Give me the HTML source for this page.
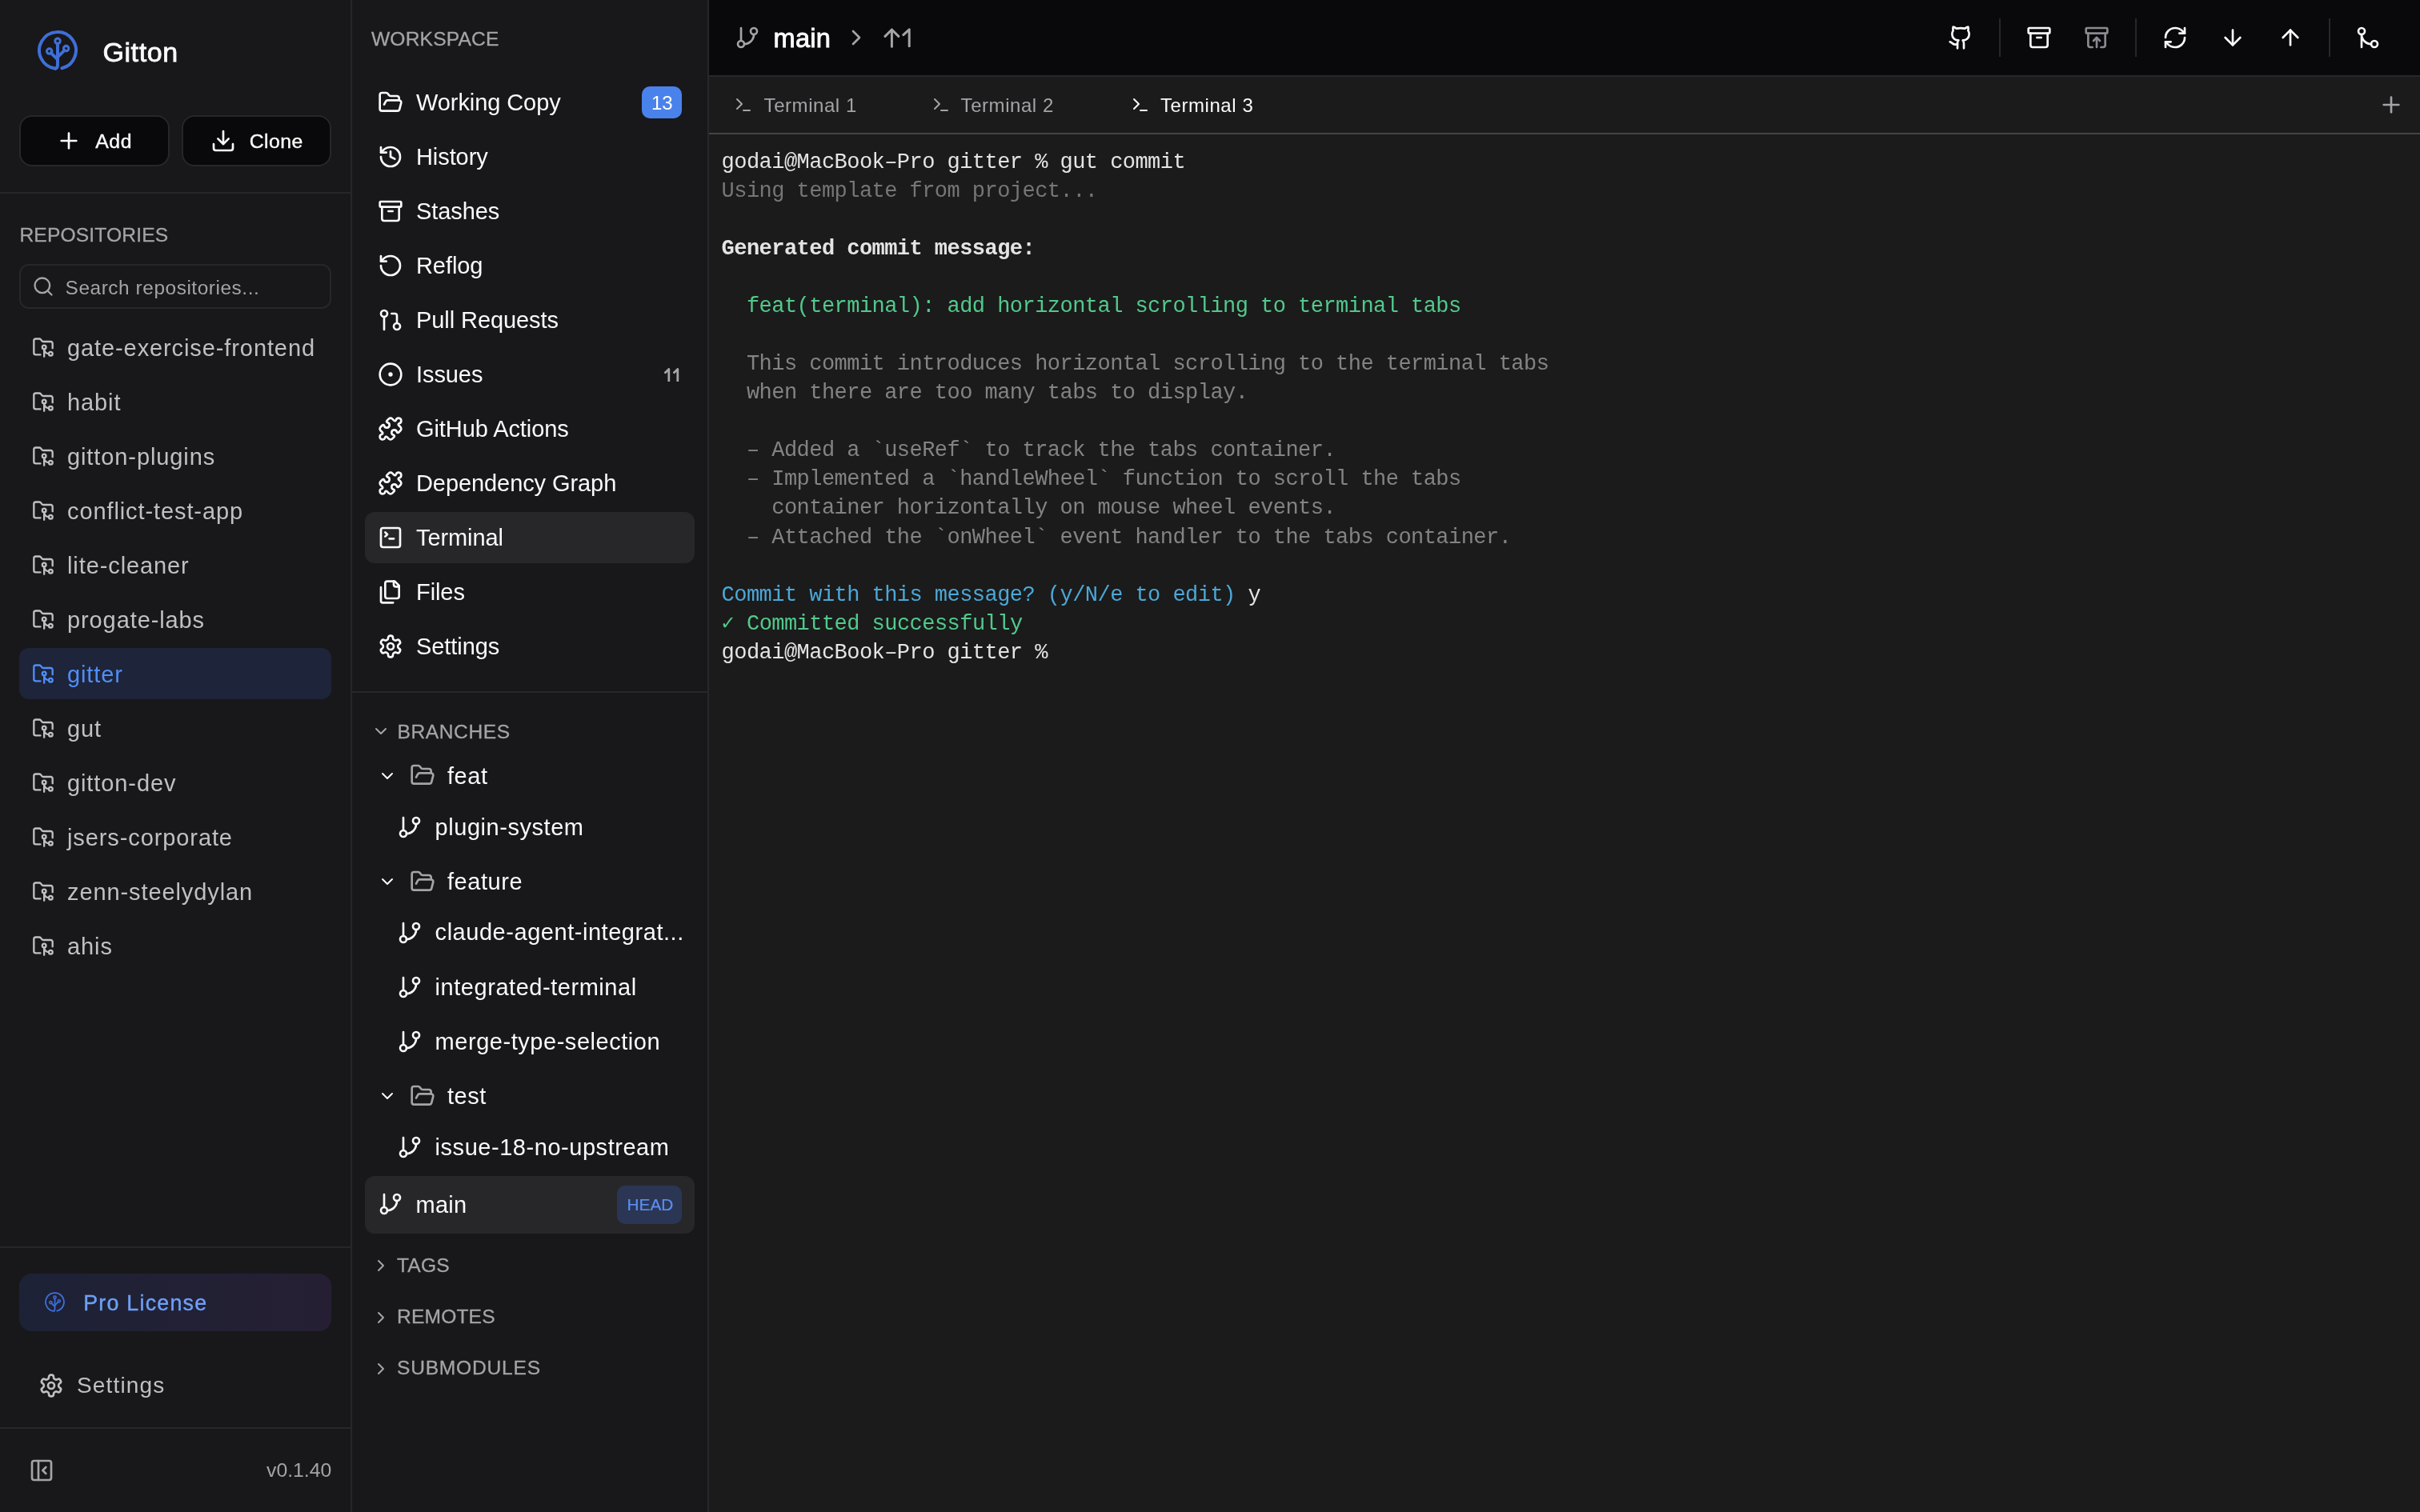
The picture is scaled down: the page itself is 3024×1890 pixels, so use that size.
<!DOCTYPE html>
<html><head><meta charset="utf-8"><title>Gitton</title>
<style>
html,body{margin:0;padding:0;background:#1b1b1b;overflow:hidden}
#root{will-change:transform;position:relative;width:1512px;height:945px;zoom:2;overflow:hidden;font-family:'Liberation Sans', sans-serif}
</style></head><body><div id="root">
<div style="position:absolute;left:0px;top:0px;width:219px;height:945px;background:#18181b;border-radius:0px;"></div>
<div style="position:absolute;left:219px;top:0px;width:1px;height:945px;background:#27272a;border-radius:0px;"></div>
<div style="position:absolute;left:220px;top:0px;width:222px;height:945px;background:#18181b;border-radius:0px;"></div>
<div style="position:absolute;left:442px;top:0px;width:1px;height:945px;background:#27272a;border-radius:0px;"></div>
<div style="position:absolute;left:443px;top:0px;width:1069px;height:47px;background:#09090b;border-radius:0px;"></div>
<div style="position:absolute;left:443px;top:47px;width:1069px;height:1px;background:#27272a;border-radius:0px;"></div>
<div style="position:absolute;left:443px;top:48px;width:1069px;height:35px;background:#1b1b1b;border-radius:0px;"></div>
<div style="position:absolute;left:443px;top:83px;width:1069px;height:1px;background:#444444;border-radius:0px;"></div>
<div style="position:absolute;left:443px;top:84px;width:1069px;height:861px;background:#1b1b1b;border-radius:0px;"></div>
<svg style="position:absolute;left:23.4px;top:19px;width:25px;height:25px" viewBox="0 0 24 24" fill="none" stroke="#3f6fd8" stroke-width="1.9" stroke-linecap="round" stroke-linejoin="round"><path d="M10.65 22.92 A11 11 0 1 1 14.6 22.69"/><path d="M12 8V20.6Q12 22.5 10.65 22.92"/><path d="M8 13.5 12 17.5"/><path d="M16.1 11.9 12 16"/><circle cx="12" cy="6.4" r="1.55" stroke-width="1.45"/><circle cx="7.06" cy="12.5" r="1.55" stroke-width="1.45"/><circle cx="17.1" cy="10.85" r="1.55" stroke-width="1.45"/></svg>
<div style="position:absolute;left:64.20px;top:23.81px;font-family:'Liberation Sans', sans-serif;font-size:17px;line-height:17px;font-weight:400;color:#fafafa;letter-spacing:0.3px;white-space:pre;-webkit-text-stroke:0.4px #fafafa;">Gitton</div>
<div style="position:absolute;left:12px;top:72px;width:94px;height:32px;background:#09090b;border-radius:8px;border:1px solid #27272a;box-sizing:border-box;"></div>
<div style="position:absolute;left:113.4px;top:72px;width:93.6px;height:32px;background:#09090b;border-radius:8px;border:1px solid #27272a;box-sizing:border-box;"></div>
<svg style="position:absolute;left:34.8px;top:80px;width:16px;height:16px" viewBox="0 0 24 24" fill="none" stroke="#fafafa" stroke-width="2" stroke-linecap="round" stroke-linejoin="round"><path d="M5 12h14"/><path d="M12 5v14"/></svg>
<div style="position:absolute;left:59.60px;top:82.25px;font-family:'Liberation Sans', sans-serif;font-size:12.4px;line-height:12.4px;font-weight:400;color:#fafafa;letter-spacing:0.3px;white-space:pre;-webkit-text-stroke:0.2px #fafafa;">Add</div>
<svg style="position:absolute;left:131.3px;top:80px;width:16px;height:16px" viewBox="0 0 24 24" fill="none" stroke="#fafafa" stroke-width="2" stroke-linecap="round" stroke-linejoin="round"><path d="M21 15v4a2 2 0 0 1-2 2H5a2 2 0 0 1-2-2v-4"/><polyline points="7 10 12 15 17 10"/><line x1="12" x2="12" y1="15" y2="3"/></svg>
<div style="position:absolute;left:155.90px;top:82.25px;font-family:'Liberation Sans', sans-serif;font-size:12.4px;line-height:12.4px;font-weight:400;color:#fafafa;letter-spacing:0.2px;white-space:pre;-webkit-text-stroke:0.2px #fafafa;">Clone</div>
<div style="position:absolute;left:0px;top:120px;width:219px;height:1px;background:#27272a;border-radius:0px;"></div>
<div style="position:absolute;left:12.20px;top:140.89px;font-family:'Liberation Sans', sans-serif;font-size:12.3px;line-height:12.3px;font-weight:400;color:#a4a4a8;letter-spacing:0.08px;white-space:pre;-webkit-text-stroke:0.15px #a4a4a8;">REPOSITORIES</div>
<div style="position:absolute;left:12px;top:165px;width:195px;height:28px;background:transparent;border-radius:6px;border:1px solid #27272a;box-sizing:border-box;"></div>
<svg style="position:absolute;left:20.2px;top:172px;width:14px;height:14px" viewBox="0 0 24 24" fill="none" stroke="#a4a4a8" stroke-width="2" stroke-linecap="round" stroke-linejoin="round"><circle cx="11" cy="11" r="8"/><path d="m21 21-4.3-4.3"/></svg>
<div style="position:absolute;left:40.80px;top:173.77px;font-family:'Liberation Sans', sans-serif;font-size:12.2px;line-height:12.2px;font-weight:400;color:#a4a4a8;letter-spacing:0.28px;white-space:pre;">Search repositories...</div>
<svg style="position:absolute;left:20px;top:210px;width:14px;height:14px" viewBox="0 0 24 24" fill="none" stroke="#c0c0c3" stroke-width="2" stroke-linecap="round" stroke-linejoin="round"><path d="M9 20H4a2 2 0 0 1-2-2V5a2 2 0 0 1 2-2h3.9a2 2 0 0 1 1.69.9l.81 1.2a2 2 0 0 0 1.67.9H20a2 2 0 0 1 2 2v5"/><circle cx="13" cy="12" r="2"/><path d="M18 19c-2.8 0-5-2.2-5-5v8"/><circle cx="20" cy="19" r="2"/></svg>
<div style="position:absolute;left:42.00px;top:210.47px;font-family:'Liberation Sans', sans-serif;font-size:14.5px;line-height:14.5px;font-weight:400;color:#c0c0c3;letter-spacing:0.45px;white-space:pre;">gate-exercise-frontend</div>
<svg style="position:absolute;left:20px;top:244px;width:14px;height:14px" viewBox="0 0 24 24" fill="none" stroke="#c0c0c3" stroke-width="2" stroke-linecap="round" stroke-linejoin="round"><path d="M9 20H4a2 2 0 0 1-2-2V5a2 2 0 0 1 2-2h3.9a2 2 0 0 1 1.69.9l.81 1.2a2 2 0 0 0 1.67.9H20a2 2 0 0 1 2 2v5"/><circle cx="13" cy="12" r="2"/><path d="M18 19c-2.8 0-5-2.2-5-5v8"/><circle cx="20" cy="19" r="2"/></svg>
<div style="position:absolute;left:42.00px;top:244.47px;font-family:'Liberation Sans', sans-serif;font-size:14.5px;line-height:14.5px;font-weight:400;color:#c0c0c3;letter-spacing:0.45px;white-space:pre;">habit</div>
<svg style="position:absolute;left:20px;top:278px;width:14px;height:14px" viewBox="0 0 24 24" fill="none" stroke="#c0c0c3" stroke-width="2" stroke-linecap="round" stroke-linejoin="round"><path d="M9 20H4a2 2 0 0 1-2-2V5a2 2 0 0 1 2-2h3.9a2 2 0 0 1 1.69.9l.81 1.2a2 2 0 0 0 1.67.9H20a2 2 0 0 1 2 2v5"/><circle cx="13" cy="12" r="2"/><path d="M18 19c-2.8 0-5-2.2-5-5v8"/><circle cx="20" cy="19" r="2"/></svg>
<div style="position:absolute;left:42.00px;top:278.47px;font-family:'Liberation Sans', sans-serif;font-size:14.5px;line-height:14.5px;font-weight:400;color:#c0c0c3;letter-spacing:0.45px;white-space:pre;">gitton-plugins</div>
<svg style="position:absolute;left:20px;top:312px;width:14px;height:14px" viewBox="0 0 24 24" fill="none" stroke="#c0c0c3" stroke-width="2" stroke-linecap="round" stroke-linejoin="round"><path d="M9 20H4a2 2 0 0 1-2-2V5a2 2 0 0 1 2-2h3.9a2 2 0 0 1 1.69.9l.81 1.2a2 2 0 0 0 1.67.9H20a2 2 0 0 1 2 2v5"/><circle cx="13" cy="12" r="2"/><path d="M18 19c-2.8 0-5-2.2-5-5v8"/><circle cx="20" cy="19" r="2"/></svg>
<div style="position:absolute;left:42.00px;top:312.47px;font-family:'Liberation Sans', sans-serif;font-size:14.5px;line-height:14.5px;font-weight:400;color:#c0c0c3;letter-spacing:0.45px;white-space:pre;">conflict-test-app</div>
<svg style="position:absolute;left:20px;top:346px;width:14px;height:14px" viewBox="0 0 24 24" fill="none" stroke="#c0c0c3" stroke-width="2" stroke-linecap="round" stroke-linejoin="round"><path d="M9 20H4a2 2 0 0 1-2-2V5a2 2 0 0 1 2-2h3.9a2 2 0 0 1 1.69.9l.81 1.2a2 2 0 0 0 1.67.9H20a2 2 0 0 1 2 2v5"/><circle cx="13" cy="12" r="2"/><path d="M18 19c-2.8 0-5-2.2-5-5v8"/><circle cx="20" cy="19" r="2"/></svg>
<div style="position:absolute;left:42.00px;top:346.47px;font-family:'Liberation Sans', sans-serif;font-size:14.5px;line-height:14.5px;font-weight:400;color:#c0c0c3;letter-spacing:0.45px;white-space:pre;">lite-cleaner</div>
<svg style="position:absolute;left:20px;top:380px;width:14px;height:14px" viewBox="0 0 24 24" fill="none" stroke="#c0c0c3" stroke-width="2" stroke-linecap="round" stroke-linejoin="round"><path d="M9 20H4a2 2 0 0 1-2-2V5a2 2 0 0 1 2-2h3.9a2 2 0 0 1 1.69.9l.81 1.2a2 2 0 0 0 1.67.9H20a2 2 0 0 1 2 2v5"/><circle cx="13" cy="12" r="2"/><path d="M18 19c-2.8 0-5-2.2-5-5v8"/><circle cx="20" cy="19" r="2"/></svg>
<div style="position:absolute;left:42.00px;top:380.47px;font-family:'Liberation Sans', sans-serif;font-size:14.5px;line-height:14.5px;font-weight:400;color:#c0c0c3;letter-spacing:0.45px;white-space:pre;">progate-labs</div>
<div style="position:absolute;left:12px;top:405px;width:195px;height:32px;background:#1e2439;border-radius:6px;"></div>
<svg style="position:absolute;left:20px;top:414px;width:14px;height:14px" viewBox="0 0 24 24" fill="none" stroke="#4f8ef7" stroke-width="2" stroke-linecap="round" stroke-linejoin="round"><path d="M9 20H4a2 2 0 0 1-2-2V5a2 2 0 0 1 2-2h3.9a2 2 0 0 1 1.69.9l.81 1.2a2 2 0 0 0 1.67.9H20a2 2 0 0 1 2 2v5"/><circle cx="13" cy="12" r="2"/><path d="M18 19c-2.8 0-5-2.2-5-5v8"/><circle cx="20" cy="19" r="2"/></svg>
<div style="position:absolute;left:42.00px;top:414.47px;font-family:'Liberation Sans', sans-serif;font-size:14.5px;line-height:14.5px;font-weight:400;color:#4f8ef7;letter-spacing:0.45px;white-space:pre;">gitter</div>
<svg style="position:absolute;left:20px;top:448px;width:14px;height:14px" viewBox="0 0 24 24" fill="none" stroke="#c0c0c3" stroke-width="2" stroke-linecap="round" stroke-linejoin="round"><path d="M9 20H4a2 2 0 0 1-2-2V5a2 2 0 0 1 2-2h3.9a2 2 0 0 1 1.69.9l.81 1.2a2 2 0 0 0 1.67.9H20a2 2 0 0 1 2 2v5"/><circle cx="13" cy="12" r="2"/><path d="M18 19c-2.8 0-5-2.2-5-5v8"/><circle cx="20" cy="19" r="2"/></svg>
<div style="position:absolute;left:42.00px;top:448.47px;font-family:'Liberation Sans', sans-serif;font-size:14.5px;line-height:14.5px;font-weight:400;color:#c0c0c3;letter-spacing:0.45px;white-space:pre;">gut</div>
<svg style="position:absolute;left:20px;top:482px;width:14px;height:14px" viewBox="0 0 24 24" fill="none" stroke="#c0c0c3" stroke-width="2" stroke-linecap="round" stroke-linejoin="round"><path d="M9 20H4a2 2 0 0 1-2-2V5a2 2 0 0 1 2-2h3.9a2 2 0 0 1 1.69.9l.81 1.2a2 2 0 0 0 1.67.9H20a2 2 0 0 1 2 2v5"/><circle cx="13" cy="12" r="2"/><path d="M18 19c-2.8 0-5-2.2-5-5v8"/><circle cx="20" cy="19" r="2"/></svg>
<div style="position:absolute;left:42.00px;top:482.47px;font-family:'Liberation Sans', sans-serif;font-size:14.5px;line-height:14.5px;font-weight:400;color:#c0c0c3;letter-spacing:0.45px;white-space:pre;">gitton-dev</div>
<svg style="position:absolute;left:20px;top:516px;width:14px;height:14px" viewBox="0 0 24 24" fill="none" stroke="#c0c0c3" stroke-width="2" stroke-linecap="round" stroke-linejoin="round"><path d="M9 20H4a2 2 0 0 1-2-2V5a2 2 0 0 1 2-2h3.9a2 2 0 0 1 1.69.9l.81 1.2a2 2 0 0 0 1.67.9H20a2 2 0 0 1 2 2v5"/><circle cx="13" cy="12" r="2"/><path d="M18 19c-2.8 0-5-2.2-5-5v8"/><circle cx="20" cy="19" r="2"/></svg>
<div style="position:absolute;left:42.00px;top:516.47px;font-family:'Liberation Sans', sans-serif;font-size:14.5px;line-height:14.5px;font-weight:400;color:#c0c0c3;letter-spacing:0.45px;white-space:pre;">jsers-corporate</div>
<svg style="position:absolute;left:20px;top:550px;width:14px;height:14px" viewBox="0 0 24 24" fill="none" stroke="#c0c0c3" stroke-width="2" stroke-linecap="round" stroke-linejoin="round"><path d="M9 20H4a2 2 0 0 1-2-2V5a2 2 0 0 1 2-2h3.9a2 2 0 0 1 1.69.9l.81 1.2a2 2 0 0 0 1.67.9H20a2 2 0 0 1 2 2v5"/><circle cx="13" cy="12" r="2"/><path d="M18 19c-2.8 0-5-2.2-5-5v8"/><circle cx="20" cy="19" r="2"/></svg>
<div style="position:absolute;left:42.00px;top:550.47px;font-family:'Liberation Sans', sans-serif;font-size:14.5px;line-height:14.5px;font-weight:400;color:#c0c0c3;letter-spacing:0.45px;white-space:pre;">zenn-steelydylan</div>
<svg style="position:absolute;left:20px;top:584px;width:14px;height:14px" viewBox="0 0 24 24" fill="none" stroke="#c0c0c3" stroke-width="2" stroke-linecap="round" stroke-linejoin="round"><path d="M9 20H4a2 2 0 0 1-2-2V5a2 2 0 0 1 2-2h3.9a2 2 0 0 1 1.69.9l.81 1.2a2 2 0 0 0 1.67.9H20a2 2 0 0 1 2 2v5"/><circle cx="13" cy="12" r="2"/><path d="M18 19c-2.8 0-5-2.2-5-5v8"/><circle cx="20" cy="19" r="2"/></svg>
<div style="position:absolute;left:42.00px;top:584.47px;font-family:'Liberation Sans', sans-serif;font-size:14.5px;line-height:14.5px;font-weight:400;color:#c0c0c3;letter-spacing:0.45px;white-space:pre;">ahis</div>
<div style="position:absolute;left:0px;top:779px;width:219px;height:1px;background:#27272a;border-radius:0px;"></div>
<div style="position:absolute;left:12px;top:796px;width:195px;height:36px;background:linear-gradient(90deg,#1d2236,#261f33);border-radius:8px;"></div>
<svg style="position:absolute;left:27.8px;top:807.6px;width:12.5px;height:12.5px" viewBox="0 0 24 24" fill="none" stroke="#3f6fd8" stroke-width="1.7" stroke-linecap="round" stroke-linejoin="round"><path d="M10.65 22.92 A11 11 0 1 1 14.6 22.69"/><path d="M12 8V20.6Q12 22.5 10.65 22.92"/><path d="M8 13.5 12 17.5"/><path d="M16.1 11.9 12 16"/><circle cx="12" cy="6.4" r="1.55" stroke-width="1.45"/><circle cx="7.06" cy="12.5" r="1.55" stroke-width="1.45"/><circle cx="17.1" cy="10.85" r="1.55" stroke-width="1.45"/></svg>
<div style="position:absolute;left:52.10px;top:808.05px;font-family:'Liberation Sans', sans-serif;font-size:13.4px;line-height:13.4px;font-weight:400;color:#6ea0f8;letter-spacing:0.62px;white-space:pre;-webkit-text-stroke:0.2px #6ea0f8;">Pro License</div>
<svg style="position:absolute;left:24px;top:858px;width:16px;height:16px" viewBox="0 0 24 24" fill="none" stroke="#c0c0c3" stroke-width="2" stroke-linecap="round" stroke-linejoin="round"><path d="M12.22 2h-.44a2 2 0 0 0-2 2v.18a2 2 0 0 1-1 1.73l-.43.25a2 2 0 0 1-2 0l-.15-.08a2 2 0 0 0-2.73.73l-.22.38a2 2 0 0 0 .73 2.73l.15.1a2 2 0 0 1 1 1.72v.51a2 2 0 0 1-1 1.74l-.15.09a2 2 0 0 0-.73 2.73l.22.38a2 2 0 0 0 2.73.73l.15-.08a2 2 0 0 1 2 0l.43.25a2 2 0 0 1 1 1.73V20a2 2 0 0 0 2 2h.44a2 2 0 0 0 2-2v-.18a2 2 0 0 1 1-1.73l.43-.25a2 2 0 0 1 2 0l.15.08a2 2 0 0 0 2.73-.73l.22-.39a2 2 0 0 0-.73-2.73l-.15-.08a2 2 0 0 1-1-1.74v-.5a2 2 0 0 1 1-1.74l.15-.09a2 2 0 0 0 .73-2.73l-.22-.38a2 2 0 0 0-2.73-.73l-.15.08a2 2 0 0 1-2 0l-.43-.25a2 2 0 0 1-1-1.73V4a2 2 0 0 0-2-2z"/><circle cx="12" cy="12" r="3"/></svg>
<div style="position:absolute;left:48.00px;top:858.90px;font-family:'Liberation Sans', sans-serif;font-size:14px;line-height:14px;font-weight:400;color:#c0c0c3;letter-spacing:0.58px;white-space:pre;">Settings</div>
<div style="position:absolute;left:0px;top:892px;width:219px;height:1px;background:#27272a;border-radius:0px;"></div>
<svg style="position:absolute;left:18px;top:911px;width:16px;height:16px" viewBox="0 0 24 24" fill="none" stroke="#a4a4a8" stroke-width="2" stroke-linecap="round" stroke-linejoin="round"><rect width="18" height="18" x="3" y="3" rx="2"/><path d="M9 3v18"/><path d="m16 15-3-3 3-3"/></svg>
<div style="position:absolute;left:166.50px;top:912.90px;font-family:'Liberation Sans', sans-serif;font-size:12.4px;line-height:12.4px;font-weight:400;color:#a4a4a8;letter-spacing:0px;white-space:pre;">v0.1.40</div>
<div style="position:absolute;left:232.00px;top:18.44px;font-family:'Liberation Sans', sans-serif;font-size:12.3px;line-height:12.3px;font-weight:400;color:#a4a4a8;letter-spacing:0.08px;white-space:pre;-webkit-text-stroke:0.15px #a4a4a8;">WORKSPACE</div>
<svg style="position:absolute;left:236px;top:56px;width:16px;height:16px" viewBox="0 0 24 24" fill="none" stroke="#fafafa" stroke-width="2" stroke-linecap="round" stroke-linejoin="round"><path d="m6 14 1.5-2.9A2 2 0 0 1 9.24 10H20a2 2 0 0 1 1.94 2.5l-1.54 6a2 2 0 0 1-1.95 1.5H4a2 2 0 0 1-2-2V5a2 2 0 0 1 2-2h3.9a2 2 0 0 1 1.69.9l.81 1.2a2 2 0 0 0 1.67.9H18a2 2 0 0 1 2 2v2"/></svg>
<div style="position:absolute;left:260.00px;top:57.02px;font-family:'Liberation Sans', sans-serif;font-size:14.5px;line-height:14.5px;font-weight:400;color:#fafafa;letter-spacing:-0.04px;white-space:pre;">Working Copy</div>
<svg style="position:absolute;left:236px;top:90px;width:16px;height:16px" viewBox="0 0 24 24" fill="none" stroke="#fafafa" stroke-width="2" stroke-linecap="round" stroke-linejoin="round"><path d="M3 12a9 9 0 1 0 9-9 9.75 9.75 0 0 0-6.74 2.74L3 8"/><path d="M3 3v5h5"/><path d="M12 7v5l4 2"/></svg>
<div style="position:absolute;left:260.00px;top:91.02px;font-family:'Liberation Sans', sans-serif;font-size:14.5px;line-height:14.5px;font-weight:400;color:#fafafa;letter-spacing:-0.04px;white-space:pre;">History</div>
<svg style="position:absolute;left:236px;top:124px;width:16px;height:16px" viewBox="0 0 24 24" fill="none" stroke="#fafafa" stroke-width="2" stroke-linecap="round" stroke-linejoin="round"><rect width="20" height="5" x="2" y="3" rx="1"/><path d="M4 8v11a2 2 0 0 0 2 2h12a2 2 0 0 0 2-2V8"/><path d="M10 12h4"/></svg>
<div style="position:absolute;left:260.00px;top:125.02px;font-family:'Liberation Sans', sans-serif;font-size:14.5px;line-height:14.5px;font-weight:400;color:#fafafa;letter-spacing:-0.04px;white-space:pre;">Stashes</div>
<svg style="position:absolute;left:236px;top:158px;width:16px;height:16px" viewBox="0 0 24 24" fill="none" stroke="#fafafa" stroke-width="2" stroke-linecap="round" stroke-linejoin="round"><path d="M3 12a9 9 0 1 0 9-9 9.75 9.75 0 0 0-6.74 2.74L3 8"/><path d="M3 3v5h5"/></svg>
<div style="position:absolute;left:260.00px;top:159.02px;font-family:'Liberation Sans', sans-serif;font-size:14.5px;line-height:14.5px;font-weight:400;color:#fafafa;letter-spacing:-0.04px;white-space:pre;">Reflog</div>
<svg style="position:absolute;left:236px;top:192px;width:16px;height:16px" viewBox="0 0 24 24" fill="none" stroke="#fafafa" stroke-width="2" stroke-linecap="round" stroke-linejoin="round"><circle cx="18" cy="18" r="3"/><circle cx="6" cy="6" r="3"/><path d="M13 6h3a2 2 0 0 1 2 2v7"/><line x1="6" x2="6" y1="9" y2="21"/></svg>
<div style="position:absolute;left:260.00px;top:193.02px;font-family:'Liberation Sans', sans-serif;font-size:14.5px;line-height:14.5px;font-weight:400;color:#fafafa;letter-spacing:-0.04px;white-space:pre;">Pull Requests</div>
<svg style="position:absolute;left:236px;top:226px;width:16px;height:16px" viewBox="0 0 24 24" fill="none" stroke="#fafafa" stroke-width="2" stroke-linecap="round" stroke-linejoin="round"><circle cx="12" cy="12" r="10"/><circle cx="12" cy="12" r="1"/></svg>
<div style="position:absolute;left:260.00px;top:227.02px;font-family:'Liberation Sans', sans-serif;font-size:14.5px;line-height:14.5px;font-weight:400;color:#fafafa;letter-spacing:-0.04px;white-space:pre;">Issues</div>
<svg style="position:absolute;left:236px;top:260px;width:16px;height:16px" viewBox="0 0 24 24" fill="none" stroke="#fafafa" stroke-width="2" stroke-linecap="round" stroke-linejoin="round"><path d="M15.39 4.39a1 1 0 0 0 1.68-.474 2.5 2.5 0 1 1 3.014 3.015 1 1 0 0 0-.474 1.68l1.683 1.682a2.414 2.414 0 0 1 0 3.414L19.61 15.39a1 1 0 0 1-1.68-.474 2.5 2.5 0 1 0-3.014 3.015 1 1 0 0 1 .474 1.68l-1.683 1.682a2.414 2.414 0 0 1-3.414 0L8.61 19.61a1 1 0 0 0-1.68.474 2.5 2.5 0 1 1-3.014-3.015 1 1 0 0 0 .474-1.68l-1.683-1.682a2.414 2.414 0 0 1 0-3.414L4.39 8.61a1 1 0 0 1 1.68.474 2.5 2.5 0 1 0 3.014-3.015 1 1 0 0 1-.474-1.68l1.683-1.682a2.414 2.414 0 0 1 3.414 0z"/></svg>
<div style="position:absolute;left:260.00px;top:261.02px;font-family:'Liberation Sans', sans-serif;font-size:14.5px;line-height:14.5px;font-weight:400;color:#fafafa;letter-spacing:-0.04px;white-space:pre;">GitHub Actions</div>
<svg style="position:absolute;left:236px;top:294px;width:16px;height:16px" viewBox="0 0 24 24" fill="none" stroke="#fafafa" stroke-width="2" stroke-linecap="round" stroke-linejoin="round"><path d="M15.39 4.39a1 1 0 0 0 1.68-.474 2.5 2.5 0 1 1 3.014 3.015 1 1 0 0 0-.474 1.68l1.683 1.682a2.414 2.414 0 0 1 0 3.414L19.61 15.39a1 1 0 0 1-1.68-.474 2.5 2.5 0 1 0-3.014 3.015 1 1 0 0 1 .474 1.68l-1.683 1.682a2.414 2.414 0 0 1-3.414 0L8.61 19.61a1 1 0 0 0-1.68.474 2.5 2.5 0 1 1-3.014-3.015 1 1 0 0 0 .474-1.68l-1.683-1.682a2.414 2.414 0 0 1 0-3.414L4.39 8.61a1 1 0 0 1 1.68.474 2.5 2.5 0 1 0 3.014-3.015 1 1 0 0 1-.474-1.68l1.683-1.682a2.414 2.414 0 0 1 3.414 0z"/></svg>
<div style="position:absolute;left:260.00px;top:295.02px;font-family:'Liberation Sans', sans-serif;font-size:14.5px;line-height:14.5px;font-weight:400;color:#fafafa;letter-spacing:-0.04px;white-space:pre;">Dependency Graph</div>
<div style="position:absolute;left:228px;top:320px;width:206px;height:32px;background:#27272a;border-radius:6px;"></div>
<svg style="position:absolute;left:236px;top:328px;width:16px;height:16px" viewBox="0 0 24 24" fill="none" stroke="#fafafa" stroke-width="2" stroke-linecap="round" stroke-linejoin="round"><path d="m7 11 2-2-2-2"/><path d="M11 13h4"/><rect width="18" height="18" x="3" y="3" rx="2" ry="2"/></svg>
<div style="position:absolute;left:260.00px;top:329.02px;font-family:'Liberation Sans', sans-serif;font-size:14.5px;line-height:14.5px;font-weight:400;color:#fafafa;letter-spacing:-0.04px;white-space:pre;">Terminal</div>
<svg style="position:absolute;left:236px;top:362px;width:16px;height:16px" viewBox="0 0 24 24" fill="none" stroke="#fafafa" stroke-width="2" stroke-linecap="round" stroke-linejoin="round"><path d="M20 7h-3a2 2 0 0 1-2-2V2"/><path d="M9 18a2 2 0 0 1-2-2V4a2 2 0 0 1 2-2h7l4 4v10a2 2 0 0 1-2 2Z"/><path d="M3 7.6v12.8A1.6 1.6 0 0 0 4.6 22h9.8"/></svg>
<div style="position:absolute;left:260.00px;top:363.02px;font-family:'Liberation Sans', sans-serif;font-size:14.5px;line-height:14.5px;font-weight:400;color:#fafafa;letter-spacing:-0.04px;white-space:pre;">Files</div>
<svg style="position:absolute;left:236px;top:396px;width:16px;height:16px" viewBox="0 0 24 24" fill="none" stroke="#fafafa" stroke-width="2" stroke-linecap="round" stroke-linejoin="round"><path d="M12.22 2h-.44a2 2 0 0 0-2 2v.18a2 2 0 0 1-1 1.73l-.43.25a2 2 0 0 1-2 0l-.15-.08a2 2 0 0 0-2.73.73l-.22.38a2 2 0 0 0 .73 2.73l.15.1a2 2 0 0 1 1 1.72v.51a2 2 0 0 1-1 1.74l-.15.09a2 2 0 0 0-.73 2.73l.22.38a2 2 0 0 0 2.73.73l.15-.08a2 2 0 0 1 2 0l.43.25a2 2 0 0 1 1 1.73V20a2 2 0 0 0 2 2h.44a2 2 0 0 0 2-2v-.18a2 2 0 0 1 1-1.73l.43-.25a2 2 0 0 1 2 0l.15.08a2 2 0 0 0 2.73-.73l.22-.39a2 2 0 0 0-.73-2.73l-.15-.08a2 2 0 0 1-1-1.74v-.5a2 2 0 0 1 1-1.74l.15-.09a2 2 0 0 0 .73-2.73l-.22-.38a2 2 0 0 0-2.73-.73l-.15.08a2 2 0 0 1-2 0l-.43-.25a2 2 0 0 1-1-1.73V4a2 2 0 0 0-2-2z"/><circle cx="12" cy="12" r="3"/></svg>
<div style="position:absolute;left:260.00px;top:397.02px;font-family:'Liberation Sans', sans-serif;font-size:14.5px;line-height:14.5px;font-weight:400;color:#fafafa;letter-spacing:-0.04px;white-space:pre;">Settings</div>
<div style="position:absolute;left:401px;top:54px;width:25px;height:20px;background:#4a82ec;border-radius:5px;"></div>
<div style="position:absolute;left:407.00px;top:58.34px;font-family:'Liberation Sans', sans-serif;font-size:12px;line-height:12px;font-weight:400;color:#ffffff;letter-spacing:0px;white-space:pre;">13</div>
<svg style="position:absolute;left:415.1px;top:229.75px;width:9.4px;height:8.85px" viewBox="0 0 9.4 8.85" fill="none" stroke="#a4a4a8" stroke-width="1.4" stroke-linecap="round" stroke-linejoin="round"><path d="M0.7 2.9 2.9 0.7V8.15"/><path d="M6.2 2.9 8.4 0.7V8.15"/></svg>
<div style="position:absolute;left:220px;top:432px;width:222px;height:1px;background:#27272a;border-radius:0px;"></div>
<svg style="position:absolute;left:232px;top:451.2px;width:12px;height:12px" viewBox="0 0 24 24" fill="none" stroke="#a4a4a8" stroke-width="2" stroke-linecap="round" stroke-linejoin="round"><path d="m6 9 6 6 6-6"/></svg>
<div style="position:absolute;left:248.20px;top:451.54px;font-family:'Liberation Sans', sans-serif;font-size:12.3px;line-height:12.3px;font-weight:400;color:#a4a4a8;letter-spacing:0.3px;white-space:pre;-webkit-text-stroke:0.15px #a4a4a8;">BRANCHES</div>
<svg style="position:absolute;left:236px;top:479px;width:12px;height:12px" viewBox="0 0 24 24" fill="none" stroke="#fafafa" stroke-width="2" stroke-linecap="round" stroke-linejoin="round"><path d="m6 9 6 6 6-6"/></svg>
<svg style="position:absolute;left:256px;top:476.7px;width:16px;height:16px" viewBox="0 0 24 24" fill="none" stroke="#a4a4a8" stroke-width="2" stroke-linecap="round" stroke-linejoin="round"><path d="m6 14 1.5-2.9A2 2 0 0 1 9.24 10H20a2 2 0 0 1 1.94 2.5l-1.54 6a2 2 0 0 1-1.95 1.5H4a2 2 0 0 1-2-2V5a2 2 0 0 1 2-2h3.9a2 2 0 0 1 1.69.9l.81 1.2a2 2 0 0 0 1.67.9H18a2 2 0 0 1 2 2v2"/></svg>
<div style="position:absolute;left:279.50px;top:477.87px;font-family:'Liberation Sans', sans-serif;font-size:14.5px;line-height:14.5px;font-weight:400;color:#fafafa;letter-spacing:0.27px;white-space:pre;">feat</div>
<svg style="position:absolute;left:248px;top:509px;width:16px;height:16px" viewBox="0 0 24 24" fill="none" stroke="#fafafa" stroke-width="2" stroke-linecap="round" stroke-linejoin="round"><line x1="6" x2="6" y1="3" y2="15"/><circle cx="18" cy="6" r="3"/><circle cx="6" cy="18" r="3"/><path d="M18 9a9 9 0 0 1-9 9"/></svg>
<div style="position:absolute;left:271.80px;top:509.87px;font-family:'Liberation Sans', sans-serif;font-size:14.5px;line-height:14.5px;font-weight:400;color:#fafafa;letter-spacing:0.27px;white-space:pre;">plugin-system</div>
<svg style="position:absolute;left:236px;top:545.1px;width:12px;height:12px" viewBox="0 0 24 24" fill="none" stroke="#fafafa" stroke-width="2" stroke-linecap="round" stroke-linejoin="round"><path d="m6 9 6 6 6-6"/></svg>
<svg style="position:absolute;left:256px;top:542.8000000000001px;width:16px;height:16px" viewBox="0 0 24 24" fill="none" stroke="#a4a4a8" stroke-width="2" stroke-linecap="round" stroke-linejoin="round"><path d="m6 14 1.5-2.9A2 2 0 0 1 9.24 10H20a2 2 0 0 1 1.94 2.5l-1.54 6a2 2 0 0 1-1.95 1.5H4a2 2 0 0 1-2-2V5a2 2 0 0 1 2-2h3.9a2 2 0 0 1 1.69.9l.81 1.2a2 2 0 0 0 1.67.9H18a2 2 0 0 1 2 2v2"/></svg>
<div style="position:absolute;left:279.50px;top:543.77px;font-family:'Liberation Sans', sans-serif;font-size:14.5px;line-height:14.5px;font-weight:400;color:#fafafa;letter-spacing:0.27px;white-space:pre;">feature</div>
<svg style="position:absolute;left:248px;top:575.1px;width:16px;height:16px" viewBox="0 0 24 24" fill="none" stroke="#fafafa" stroke-width="2" stroke-linecap="round" stroke-linejoin="round"><line x1="6" x2="6" y1="3" y2="15"/><circle cx="18" cy="6" r="3"/><circle cx="6" cy="18" r="3"/><path d="M18 9a9 9 0 0 1-9 9"/></svg>
<div style="position:absolute;left:271.80px;top:575.67px;font-family:'Liberation Sans', sans-serif;font-size:14.5px;line-height:14.5px;font-weight:400;color:#fafafa;letter-spacing:0.27px;white-space:pre;">claude-agent-integrat...</div>
<svg style="position:absolute;left:248px;top:609px;width:16px;height:16px" viewBox="0 0 24 24" fill="none" stroke="#fafafa" stroke-width="2" stroke-linecap="round" stroke-linejoin="round"><line x1="6" x2="6" y1="3" y2="15"/><circle cx="18" cy="6" r="3"/><circle cx="6" cy="18" r="3"/><path d="M18 9a9 9 0 0 1-9 9"/></svg>
<div style="position:absolute;left:271.80px;top:609.87px;font-family:'Liberation Sans', sans-serif;font-size:14.5px;line-height:14.5px;font-weight:400;color:#fafafa;letter-spacing:0.27px;white-space:pre;">integrated-terminal</div>
<svg style="position:absolute;left:248px;top:643px;width:16px;height:16px" viewBox="0 0 24 24" fill="none" stroke="#fafafa" stroke-width="2" stroke-linecap="round" stroke-linejoin="round"><line x1="6" x2="6" y1="3" y2="15"/><circle cx="18" cy="6" r="3"/><circle cx="6" cy="18" r="3"/><path d="M18 9a9 9 0 0 1-9 9"/></svg>
<div style="position:absolute;left:271.80px;top:643.97px;font-family:'Liberation Sans', sans-serif;font-size:14.5px;line-height:14.5px;font-weight:400;color:#fafafa;letter-spacing:0.27px;white-space:pre;">merge-type-selection</div>
<svg style="position:absolute;left:236px;top:679.2px;width:12px;height:12px" viewBox="0 0 24 24" fill="none" stroke="#fafafa" stroke-width="2" stroke-linecap="round" stroke-linejoin="round"><path d="m6 9 6 6 6-6"/></svg>
<svg style="position:absolute;left:256px;top:676.9000000000001px;width:16px;height:16px" viewBox="0 0 24 24" fill="none" stroke="#a4a4a8" stroke-width="2" stroke-linecap="round" stroke-linejoin="round"><path d="m6 14 1.5-2.9A2 2 0 0 1 9.24 10H20a2 2 0 0 1 1.94 2.5l-1.54 6a2 2 0 0 1-1.95 1.5H4a2 2 0 0 1-2-2V5a2 2 0 0 1 2-2h3.9a2 2 0 0 1 1.69.9l.81 1.2a2 2 0 0 0 1.67.9H18a2 2 0 0 1 2 2v2"/></svg>
<div style="position:absolute;left:279.50px;top:677.97px;font-family:'Liberation Sans', sans-serif;font-size:14.5px;line-height:14.5px;font-weight:400;color:#fafafa;letter-spacing:0.27px;white-space:pre;">test</div>
<svg style="position:absolute;left:248px;top:708.9px;width:16px;height:16px" viewBox="0 0 24 24" fill="none" stroke="#fafafa" stroke-width="2" stroke-linecap="round" stroke-linejoin="round"><line x1="6" x2="6" y1="3" y2="15"/><circle cx="18" cy="6" r="3"/><circle cx="6" cy="18" r="3"/><path d="M18 9a9 9 0 0 1-9 9"/></svg>
<div style="position:absolute;left:271.80px;top:709.97px;font-family:'Liberation Sans', sans-serif;font-size:14.5px;line-height:14.5px;font-weight:400;color:#fafafa;letter-spacing:0.27px;white-space:pre;">issue-18-no-upstream</div>
<div style="position:absolute;left:228px;top:735px;width:206px;height:36px;background:#27272a;border-radius:6px;"></div>
<svg style="position:absolute;left:236px;top:744.7px;width:16px;height:16px" viewBox="0 0 24 24" fill="none" stroke="#fafafa" stroke-width="2" stroke-linecap="round" stroke-linejoin="round"><line x1="6" x2="6" y1="3" y2="15"/><circle cx="18" cy="6" r="3"/><circle cx="6" cy="18" r="3"/><path d="M18 9a9 9 0 0 1-9 9"/></svg>
<div style="position:absolute;left:259.80px;top:745.82px;font-family:'Liberation Sans', sans-serif;font-size:14.5px;line-height:14.5px;font-weight:400;color:#fafafa;letter-spacing:0.1px;white-space:pre;">main</div>
<div style="position:absolute;left:385.6px;top:741px;width:40.4px;height:24px;background:#2a3654;border-radius:5px;"></div>
<div style="position:absolute;left:391.80px;top:747.89px;font-family:'Liberation Sans', sans-serif;font-size:10.4px;line-height:10.4px;font-weight:400;color:#5b8def;letter-spacing:0px;white-space:pre;-webkit-text-stroke:0.12px #5b8def;">HEAD</div>
<svg style="position:absolute;left:232px;top:785.1px;width:12px;height:12px" viewBox="0 0 24 24" fill="none" stroke="#a4a4a8" stroke-width="2" stroke-linecap="round" stroke-linejoin="round"><path d="m9 18 6-6-6-6"/></svg>
<div style="position:absolute;left:248.00px;top:784.94px;font-family:'Liberation Sans', sans-serif;font-size:12.3px;line-height:12.3px;font-weight:400;color:#a4a4a8;letter-spacing:0.08px;white-space:pre;-webkit-text-stroke:0.15px #a4a4a8;">TAGS</div>
<svg style="position:absolute;left:232px;top:817.4px;width:12px;height:12px" viewBox="0 0 24 24" fill="none" stroke="#a4a4a8" stroke-width="2" stroke-linecap="round" stroke-linejoin="round"><path d="m9 18 6-6-6-6"/></svg>
<div style="position:absolute;left:248.00px;top:817.24px;font-family:'Liberation Sans', sans-serif;font-size:12.3px;line-height:12.3px;font-weight:400;color:#a4a4a8;letter-spacing:0.08px;white-space:pre;-webkit-text-stroke:0.15px #a4a4a8;">REMOTES</div>
<svg style="position:absolute;left:232px;top:849.4px;width:12px;height:12px" viewBox="0 0 24 24" fill="none" stroke="#a4a4a8" stroke-width="2" stroke-linecap="round" stroke-linejoin="round"><path d="m9 18 6-6-6-6"/></svg>
<div style="position:absolute;left:248.00px;top:849.24px;font-family:'Liberation Sans', sans-serif;font-size:12.3px;line-height:12.3px;font-weight:400;color:#a4a4a8;letter-spacing:0.38px;white-space:pre;-webkit-text-stroke:0.15px #a4a4a8;">SUBMODULES</div>
<svg style="position:absolute;left:459px;top:15.5px;width:16px;height:16px" viewBox="0 0 24 24" fill="none" stroke="#a4a4a8" stroke-width="2" stroke-linecap="round" stroke-linejoin="round"><line x1="6" x2="6" y1="3" y2="15"/><circle cx="18" cy="6" r="3"/><circle cx="6" cy="18" r="3"/><path d="M18 9a9 9 0 0 1-9 9"/></svg>
<div style="position:absolute;left:483.30px;top:15.80px;font-family:'Liberation Sans', sans-serif;font-size:16.3px;line-height:16.3px;font-weight:400;color:#fafafa;letter-spacing:0.1px;white-space:pre;-webkit-text-stroke:0.45px #fafafa;">main</div>
<svg style="position:absolute;left:527px;top:15.5px;width:16px;height:16px" viewBox="0 0 24 24" fill="none" stroke="#a4a4a8" stroke-width="2" stroke-linecap="round" stroke-linejoin="round"><path d="m9 18 6-6-6-6"/></svg>
<svg style="position:absolute;left:551.9px;top:17.4px;width:10.4px;height:12.6px" viewBox="0 0 10.4 12.6" fill="none" stroke="#a4a4a8" stroke-width="1.5" stroke-linecap="round" stroke-linejoin="round"><path d="M1 5.2 5.2 1 9.4 5.2"/><path d="M5.2 1v10.6"/></svg>
<svg style="position:absolute;left:563.3px;top:17.4px;width:6px;height:12.2px" viewBox="0 0 6 12.2" fill="none" stroke="#a4a4a8" stroke-width="1.5" stroke-linecap="round" stroke-linejoin="round"><path d="M0.9 4.3 4.6 0.9V11.4"/></svg>
<svg style="position:absolute;left:1216.9px;top:15.4px;width:16px;height:16px" viewBox="0 0 24 24" fill="none" stroke="#fafafa" stroke-width="2" stroke-linecap="round" stroke-linejoin="round"><path d="M15 22v-4a4.8 4.8 0 0 0-1-3.5c3 0 6-2 6-5.5.08-1.25-.27-2.48-1-3.5.28-1.15.28-2.35 0-3.5 0 0-1 0-3 1.5-2.64-.5-5.36-.5-8 0C6 2 5 2 5 2c-.3 1.15-.3 2.35 0 3.5A5.403 5.403 0 0 0 4 9c0 3.5 3 5.5 6 5.5-.39.49-.68 1.05-.85 1.65-.17.6-.22 1.23-.15 1.85v4"/><path d="M9 18c-4.51 2-5-2-7-2"/></svg>
<div style="position:absolute;left:1249px;top:11.5px;width:1px;height:24px;background:#27272a;border-radius:0px;"></div>
<svg style="position:absolute;left:1266.1px;top:15.5px;width:16px;height:16px" viewBox="0 0 24 24" fill="none" stroke="#fafafa" stroke-width="2" stroke-linecap="round" stroke-linejoin="round"><rect width="20" height="5" x="2" y="3" rx="1"/><path d="M4 8v11a2 2 0 0 0 2 2h12a2 2 0 0 0 2-2V8"/><path d="M10 12h4"/></svg>
<svg style="position:absolute;left:1302px;top:15.5px;width:16px;height:16px" viewBox="0 0 24 24" fill="none" stroke="#8a8a90" stroke-width="2" stroke-linecap="round" stroke-linejoin="round"><rect width="20" height="5" x="2" y="3" rx="1"/><path d="M4 8v11a2 2 0 0 0 2 2h2"/><path d="M20 8v11a2 2 0 0 1-2 2h-2"/><path d="m9 15 3-3 3 3"/><path d="M12 12v9"/></svg>
<div style="position:absolute;left:1334px;top:11.5px;width:1px;height:24px;background:#27272a;border-radius:0px;"></div>
<svg style="position:absolute;left:1351px;top:15.5px;width:16px;height:16px" viewBox="0 0 24 24" fill="none" stroke="#fafafa" stroke-width="2" stroke-linecap="round" stroke-linejoin="round"><path d="M3 12a9 9 0 0 1 9-9 9.75 9.75 0 0 1 6.74 2.74L21 8"/><path d="M21 3v5h-5"/><path d="M21 12a9 9 0 0 1-9 9 9.75 9.75 0 0 1-6.74-2.74L3 16"/><path d="M8 16H3v5"/></svg>
<svg style="position:absolute;left:1387px;top:15.5px;width:16px;height:16px" viewBox="0 0 24 24" fill="none" stroke="#fafafa" stroke-width="2" stroke-linecap="round" stroke-linejoin="round"><path d="M12 5v14"/><path d="m19 12-7 7-7-7"/></svg>
<svg style="position:absolute;left:1423px;top:15.5px;width:16px;height:16px" viewBox="0 0 24 24" fill="none" stroke="#fafafa" stroke-width="2" stroke-linecap="round" stroke-linejoin="round"><path d="m5 12 7-7 7 7"/><path d="M12 19V5"/></svg>
<div style="position:absolute;left:1455px;top:11.5px;width:1px;height:24px;background:#27272a;border-radius:0px;"></div>
<svg style="position:absolute;left:1471.7px;top:15.5px;width:16px;height:16px" viewBox="0 0 24 24" fill="none" stroke="#fafafa" stroke-width="2" stroke-linecap="round" stroke-linejoin="round"><circle cx="18" cy="18" r="3"/><circle cx="6" cy="6" r="3"/><path d="M6 21V9a9 9 0 0 0 9 9"/></svg>
<svg style="position:absolute;left:458.6px;top:59.6px;width:12px;height:12px" viewBox="0 0 24 24" fill="none" stroke="#a4a4a8" stroke-width="2" stroke-linecap="round" stroke-linejoin="round"><polyline points="4 17 10 11 4 5"/><line x1="12" x2="20" y1="19" y2="19"/></svg>
<div style="position:absolute;left:477.30px;top:59.94px;font-family:'Liberation Sans', sans-serif;font-size:12.0px;line-height:12.0px;font-weight:400;color:#a4a4a8;letter-spacing:0.28px;white-space:pre;">Terminal 1</div>
<svg style="position:absolute;left:582.1px;top:59.6px;width:12px;height:12px" viewBox="0 0 24 24" fill="none" stroke="#a4a4a8" stroke-width="2" stroke-linecap="round" stroke-linejoin="round"><polyline points="4 17 10 11 4 5"/><line x1="12" x2="20" y1="19" y2="19"/></svg>
<div style="position:absolute;left:600.30px;top:59.94px;font-family:'Liberation Sans', sans-serif;font-size:12.0px;line-height:12.0px;font-weight:400;color:#a4a4a8;letter-spacing:0.28px;white-space:pre;">Terminal 2</div>
<svg style="position:absolute;left:706.6px;top:59.6px;width:12px;height:12px" viewBox="0 0 24 24" fill="none" stroke="#fafafa" stroke-width="2" stroke-linecap="round" stroke-linejoin="round"><polyline points="4 17 10 11 4 5"/><line x1="12" x2="20" y1="19" y2="19"/></svg>
<div style="position:absolute;left:725.00px;top:59.94px;font-family:'Liberation Sans', sans-serif;font-size:12.0px;line-height:12.0px;font-weight:400;color:#fafafa;letter-spacing:0.28px;white-space:pre;">Terminal 3</div>
<svg style="position:absolute;left:1486px;top:57.5px;width:16px;height:16px" viewBox="0 0 24 24" fill="none" stroke="#a4a4a8" stroke-width="2" stroke-linecap="round" stroke-linejoin="round"><path d="M5 12h14"/><path d="M12 5v14"/></svg>
<div style="position:absolute;left:450.8px;top:94.86px;font-family:'Liberation Mono', monospace;font-size:13.5px;line-height:13.5px;letter-spacing:-0.27px;white-space:pre"><span style="color:#e4e4e4;font-weight:400">godai@MacBook–Pro gitter % gut commit</span></div>
<div style="position:absolute;left:450.8px;top:112.89px;font-family:'Liberation Mono', monospace;font-size:13.5px;line-height:13.5px;letter-spacing:-0.27px;white-space:pre"><span style="color:#767676;font-weight:400">Using template from project...</span></div>
<div style="position:absolute;left:450.8px;top:148.95px;font-family:'Liberation Mono', monospace;font-size:13.5px;line-height:13.5px;letter-spacing:-0.27px;white-space:pre"><span style="color:#e4e4e4;font-weight:700">Generated commit message:</span></div>
<div style="position:absolute;left:450.8px;top:185.01px;font-family:'Liberation Mono', monospace;font-size:13.5px;line-height:13.5px;letter-spacing:-0.27px;white-space:pre"><span style="color:#52c98c;font-weight:400">  feat(terminal): add horizontal scrolling to terminal tabs</span></div>
<div style="position:absolute;left:450.8px;top:221.07px;font-family:'Liberation Mono', monospace;font-size:13.5px;line-height:13.5px;letter-spacing:-0.27px;white-space:pre"><span style="color:#838383;font-weight:400">  This commit introduces horizontal scrolling to the terminal tabs</span></div>
<div style="position:absolute;left:450.8px;top:239.10px;font-family:'Liberation Mono', monospace;font-size:13.5px;line-height:13.5px;letter-spacing:-0.27px;white-space:pre"><span style="color:#838383;font-weight:400">  when there are too many tabs to display.</span></div>
<div style="position:absolute;left:450.8px;top:275.16px;font-family:'Liberation Mono', monospace;font-size:13.5px;line-height:13.5px;letter-spacing:-0.27px;white-space:pre"><span style="color:#838383;font-weight:400">  – Added a `useRef` to track the tabs container.</span></div>
<div style="position:absolute;left:450.8px;top:293.19px;font-family:'Liberation Mono', monospace;font-size:13.5px;line-height:13.5px;letter-spacing:-0.27px;white-space:pre"><span style="color:#838383;font-weight:400">  – Implemented a `handleWheel` function to scroll the tabs</span></div>
<div style="position:absolute;left:450.8px;top:311.22px;font-family:'Liberation Mono', monospace;font-size:13.5px;line-height:13.5px;letter-spacing:-0.27px;white-space:pre"><span style="color:#838383;font-weight:400">    container horizontally on mouse wheel events.</span></div>
<div style="position:absolute;left:450.8px;top:329.25px;font-family:'Liberation Mono', monospace;font-size:13.5px;line-height:13.5px;letter-spacing:-0.27px;white-space:pre"><span style="color:#838383;font-weight:400">  – Attached the `onWheel` event handler to the tabs container.</span></div>
<div style="position:absolute;left:450.8px;top:365.31px;font-family:'Liberation Mono', monospace;font-size:13.5px;line-height:13.5px;letter-spacing:-0.27px;white-space:pre"><span style="color:#4ba8d8;font-weight:400">Commit with this message? (y/N/e to edit) </span><span style="color:#e4e4e4;font-weight:400">y</span></div>
<div style="position:absolute;left:450.8px;top:383.34px;font-family:'Liberation Mono', monospace;font-size:13.5px;line-height:13.5px;letter-spacing:-0.27px;white-space:pre"><span style="color:#52c98c;font-weight:400">✓ Committed successfully</span></div>
<div style="position:absolute;left:450.8px;top:401.37px;font-family:'Liberation Mono', monospace;font-size:13.5px;line-height:13.5px;letter-spacing:-0.27px;white-space:pre"><span style="color:#e4e4e4;font-weight:400">godai@MacBook–Pro gitter %</span></div>
</div><script>(function(){var z=window.innerWidth/1512;if(z>0.4&&z<5&&Math.abs(z-2)>0.01)document.getElementById('root').style.zoom=z;})();</script></body></html>
